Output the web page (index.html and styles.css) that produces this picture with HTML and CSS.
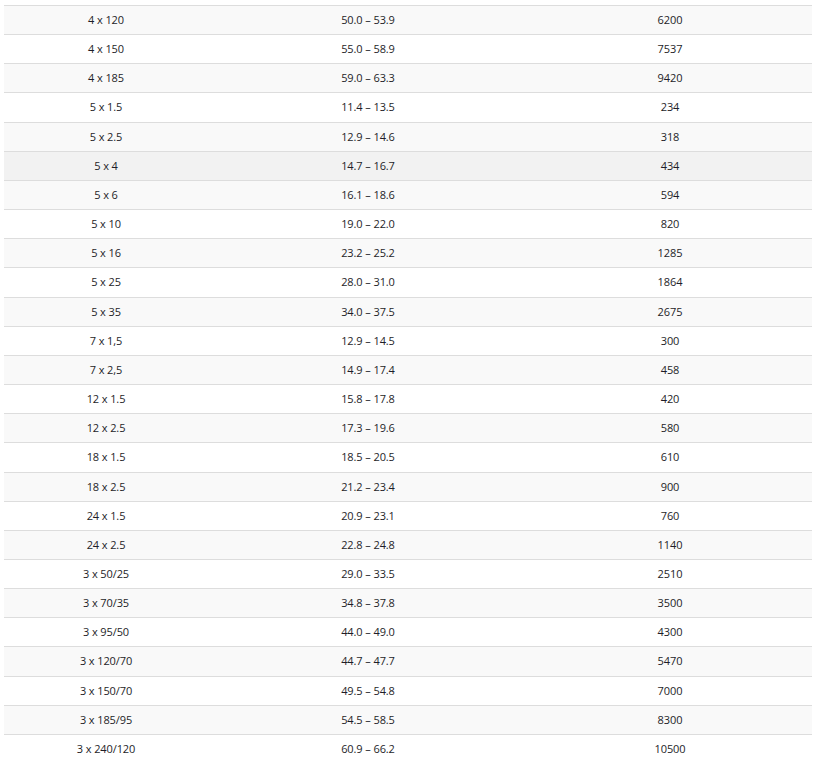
FILE: index.html
```html
<!DOCTYPE html>
<html>
<head>
<meta charset="utf-8">
<link rel="stylesheet" href="styles.css">
</head>
<body>
<div class="wrap">
<table class="spec">
<colgroup><col class="c1"><col class="c2"><col class="c3"></colgroup>
<tbody>
<tr><td>4 x 120</td><td>50.0 – 53.9</td><td>6200</td></tr>
<tr><td>4 x 150</td><td>55.0 – 58.9</td><td>7537</td></tr>
<tr><td>4 x 185</td><td>59.0 – 63.3</td><td>9420</td></tr>
<tr><td>5 x 1.5</td><td>11.4 – 13.5</td><td>234</td></tr>
<tr><td>5 x 2.5</td><td>12.9 – 14.6</td><td>318</td></tr>
<tr class="hover"><td>5 x 4</td><td>14.7 – 16.7</td><td>434</td></tr>
<tr><td>5 x 6</td><td>16.1 – 18.6</td><td>594</td></tr>
<tr><td>5 x 10</td><td>19.0 – 22.0</td><td>820</td></tr>
<tr><td>5 x 16</td><td>23.2 – 25.2</td><td>1285</td></tr>
<tr><td>5 x 25</td><td>28.0 – 31.0</td><td>1864</td></tr>
<tr><td>5 x 35</td><td>34.0 – 37.5</td><td>2675</td></tr>
<tr><td>7 x 1,5</td><td>12.9 – 14.5</td><td>300</td></tr>
<tr><td>7 x 2,5</td><td>14.9 – 17.4</td><td>458</td></tr>
<tr><td>12 x 1.5</td><td>15.8 – 17.8</td><td>420</td></tr>
<tr><td>12 x 2.5</td><td>17.3 – 19.6</td><td>580</td></tr>
<tr><td>18 x 1.5</td><td>18.5 – 20.5</td><td>610</td></tr>
<tr><td>18 x 2.5</td><td>21.2 – 23.4</td><td>900</td></tr>
<tr><td>24 x 1.5</td><td>20.9 – 23.1</td><td>760</td></tr>
<tr><td>24 x 2.5</td><td>22.8 – 24.8</td><td>1140</td></tr>
<tr><td>3 x 50/25</td><td>29.0 – 33.5</td><td>2510</td></tr>
<tr><td>3 x 70/35</td><td>34.8 – 37.8</td><td>3500</td></tr>
<tr><td>3 x 95/50</td><td>44.0 – 49.0</td><td>4300</td></tr>
<tr><td>3 x 120/70</td><td>44.7 – 47.7</td><td>5470</td></tr>
<tr><td>3 x 150/70</td><td>49.5 – 54.8</td><td>7000</td></tr>
<tr><td>3 x 185/95</td><td>54.5 – 58.5</td><td>8300</td></tr>
<tr><td>3 x 240/120</td><td>60.9 – 66.2</td><td>10500</td></tr>
</tbody>
</table>
</div>
</body>
</html>
```

FILE: styles.css
```css
html, body {
  margin: 0;
  padding: 0;
  background: #ffffff;
}
.wrap {
  padding: 5px 5px 0 4px;
}
.spec {
  width: 808px;
  border-collapse: collapse;
  table-layout: fixed;
  font-family: "Open Sans", "Noto Sans", sans-serif;
  font-size: 11px;
  letter-spacing: -0.1px;
  color: #1e1e28;
}
.c1 { width: 204px; }
.c2 { width: 320px; }
.c3 { width: 284px; }
.spec td {
  border-top: 1px solid #dddddd;
  padding: 4px 8px;
  line-height: 20.16px;
  text-align: center;
  vertical-align: middle;
}
.spec tr:nth-child(odd) td {
  background: #f9f9f9;
}
.spec tr.hover td {
  background: #f2f2f2;
}
```
